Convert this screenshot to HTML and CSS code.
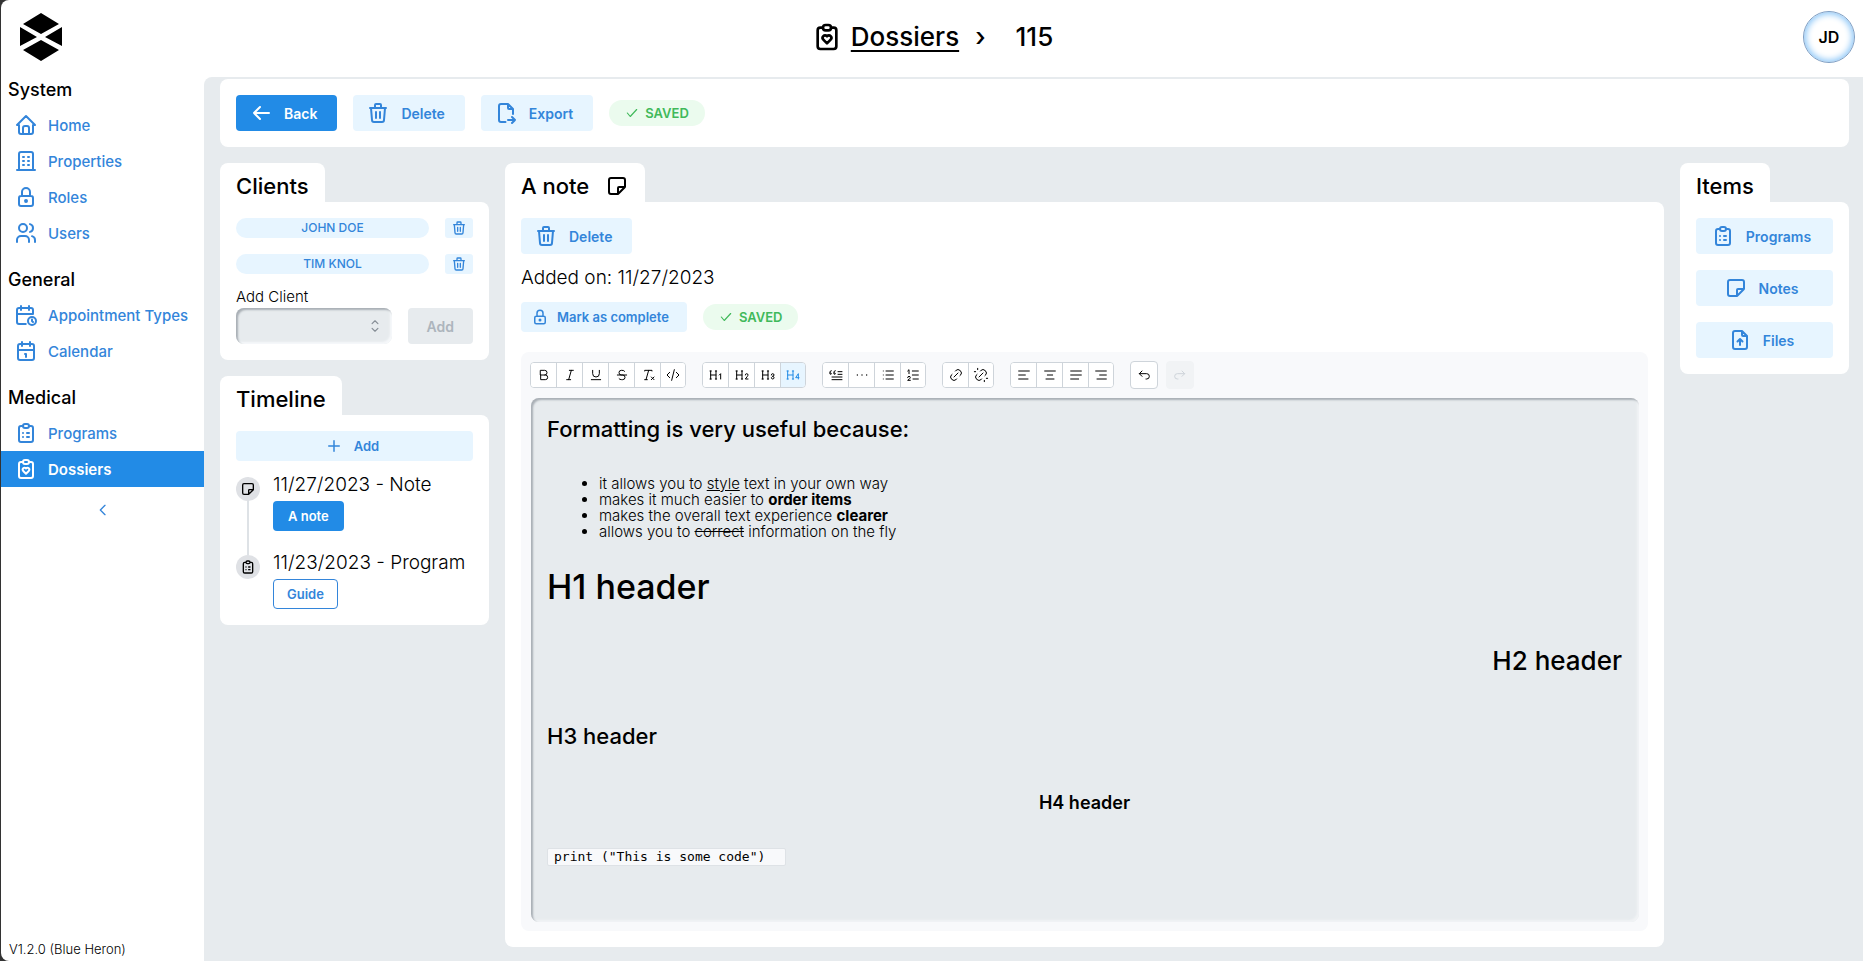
FILE: index.html
```html
<!DOCTYPE html>
<html lang="en">
<head>
<meta charset="utf-8">
<title>Dossiers › 115</title>
<link rel="stylesheet" href="styles.css">
</head>
<body>
<svg class="sprite" aria-hidden="true">
  <symbol id="home" viewBox="0 0 24 24"><path d="M5 12H3l9-9l9 9h-2M5 12v7a2 2 0 0 0 2 2h10a2 2 0 0 0 2-2v-7M9 21v-6a2 2 0 0 1 2-2h2a2 2 0 0 1 2 2v6"/></symbol>
  <symbol id="building" viewBox="0 0 24 24"><path d="M3 21h18M9 8h1M9 12h1M9 16h1M14 8h1M14 12h1M14 16h1M5 21V5a2 2 0 0 1 2-2h10a2 2 0 0 1 2 2v16"/></symbol>
  <symbol id="lock" viewBox="0 0 24 24"><path d="M5 13a2 2 0 0 1 2-2h10a2 2 0 0 1 2 2v6a2 2 0 0 1-2 2H7a2 2 0 0 1-2-2zM11 16a1 1 0 1 0 2 0a1 1 0 0 0-2 0M8 11V7a4 4 0 1 1 8 0v4"/></symbol>
  <symbol id="users" viewBox="0 0 24 24"><path d="M5 7a4 4 0 1 0 8 0a4 4 0 1 0-8 0M3 21v-2a4 4 0 0 1 4-4h4a4 4 0 0 1 4 4v2M16 3.13a4 4 0 0 1 0 7.75M21 21v-2a4 4 0 0 0-3-3.85"/></symbol>
  <symbol id="calendar-time" viewBox="0 0 24 24"><path d="M11.795 21H5a2 2 0 0 1-2-2V7a2 2 0 0 1 2-2h12a2 2 0 0 1 2 2v4M14 18a4 4 0 1 0 8 0a4 4 0 1 0-8 0M15 3v4M7 3v4M3 11h16M18 16.5V18l1 1"/></symbol>
  <symbol id="calendar" viewBox="0 0 24 24"><path d="M4 7a2 2 0 0 1 2-2h12a2 2 0 0 1 2 2v12a2 2 0 0 1-2 2H6a2 2 0 0 1-2-2zM16 3v4M8 3v4M4 11h16M11 15h1v3"/></symbol>
  <symbol id="clip-list" viewBox="0 0 24 24"><path d="M9 5H7a2 2 0 0 0-2 2v12a2 2 0 0 0 2 2h10a2 2 0 0 0 2-2V7a2 2 0 0 0-2-2h-2M9 5a2 2 0 0 1 2-2h2a2 2 0 0 1 2 2a2 2 0 0 1-2 2h-2a2 2 0 0 1-2-2zM9 12h.01M13 12h2M9 16h.01M13 16h2"/></symbol>
  <symbol id="clip-heart" viewBox="0 0 24 24"><path d="M9 5H7a2 2 0 0 0-2 2v12a2 2 0 0 0 2 2h10a2 2 0 0 0 2-2V7a2 2 0 0 0-2-2h-2M9 5a2 2 0 0 1 2-2h2a2 2 0 0 1 2 2a2 2 0 0 1-2 2h-2a2 2 0 0 1-2-2zM11.993 16.75l2.747-2.815a1.9 1.9 0 0 0 0-2.632a1.775 1.775 0 0 0-2.56 0l-.183.188l-.183-.189a1.775 1.775 0 0 0-2.56 0a1.899 1.899 0 0 0 0 2.632z"/></symbol>
  <symbol id="trash" viewBox="0 0 24 24"><path d="M4 7h16M10 11v6M14 11v6M5 7l1 12a2 2 0 0 0 2 2h8a2 2 0 0 0 2-2l1-12M9 7V4a1 1 0 0 1 1-1h4a1 1 0 0 1 1 1v3"/></symbol>
  <symbol id="arrow-left" viewBox="0 0 24 24"><path d="M5 12h15M11 6l-6 6l6 6"/></symbol>
  <symbol id="file-export" viewBox="0 0 24 24"><path d="M14 3v4a1 1 0 0 0 1 1h4M11.500 21H7a2 2 0 0 1-2-2V5a2 2 0 0 1 2-2h7l5 5v5M14 19h7M18 16l3 3l-3 3"/></symbol>
  <symbol id="file-upload" viewBox="0 0 24 24"><path d="M14 3v4a1 1 0 0 0 1 1h4M17 21H7a2 2 0 0 1-2-2V5a2 2 0 0 1 2-2h7l5 5v11a2 2 0 0 1-2 2zM12 11v6M9.500 13.500L12 11l2.500 2.500"/></symbol>
  <symbol id="note" viewBox="0 0 24 24"><path d="M13 20l7-7M13 20v-6a1 1 0 0 1 1-1h6V6a2 2 0 0 0-2-2H6a2 2 0 0 0-2 2v12a2 2 0 0 0 2 2z"/></symbol>
  <symbol id="check" viewBox="0 0 24 24"><path d="M4 12l5 6L20 6"/></symbol>
  <symbol id="plus" viewBox="0 0 24 24"><path d="M12 5v14M5 12h14"/></symbol>
  <symbol id="chev-left" viewBox="0 0 24 24"><path d="M15 5l-7 7l7 7"/></symbol>
  <symbol id="selector" viewBox="0 0 24 24"><path d="M7 8l5-5l5 5M17 16l-5 5l-5-5"/></symbol>
  <symbol id="bold" viewBox="0 0 24 24"><path d="M7 5h6a3.500 3.500 0 0 1 0 7H7zM13 12h1a3.500 3.500 0 0 1 0 7H7v-7"/></symbol>
  <symbol id="italic" viewBox="0 0 24 24"><path d="M11 5h6M7 19h6M14 5l-4 14"/></symbol>
  <symbol id="underline" viewBox="0 0 24 24"><path d="M7 5v5a5 5 0 0 0 10 0V5M5 19h14"/></symbol>
  <symbol id="strike" viewBox="0 0 24 24"><path d="M5 12h14M16 6.500a4 2 0 0 0-4-1.500h-1a3.500 3.500 0 0 0 0 7h2a3.500 3.500 0 0 1 0 7h-1.500a4 2 0 0 1-4-1.500"/></symbol>
  <symbol id="clear" viewBox="0 0 24 24"><path d="M17 15l4 4m0-4l-4 4M7 6V5h11v1M7 19h4M13 5L9 19"/></symbol>
  <symbol id="code" viewBox="0 0 24 24"><path d="M7 8l-4 4l4 4M17 8l4 4l-4 4M14 4l-4 16"/></symbol>
  <symbol id="h1" viewBox="0 0 24 24"><path d="M19 18v-8l-2 2M4 6v12M12 6v12M11 18h2M3 18h2M4 12h8M3 6h2M11 6h2"/></symbol>
  <symbol id="h2" viewBox="0 0 24 24"><path d="M17 12a2 2 0 1 1 4 0c0 .591-.417 1.318-.816 1.858L17 18h4M4 6v12M12 6v12M11 18h2M3 18h2M4 12h8M3 6h2M11 6h2"/></symbol>
  <symbol id="h3" viewBox="0 0 24 24"><path d="M19 14a2 2 0 1 0-2-2M17 16a2 2 0 1 0 2-2M4 6v12M12 6v12M11 18h2M3 18h2M4 12h8M3 6h2M11 6h2"/></symbol>
  <symbol id="h4" viewBox="0 0 24 24"><path d="M20 18v-8l-4 6h5M4 6v12M12 6v12M11 18h2M3 18h2M4 12h8M3 6h2M11 6h2"/></symbol>
  <symbol id="quote" viewBox="0 0 24 24"><path d="M6 15h15M21 19H6M15 11h6M21 7h-6M9 9h1a1 1 0 1 1-1 1V7.500a2 2 0 0 1 2-2M3 9h1a1 1 0 1 1-1 1V7.500a2 2 0 0 1 2-2"/></symbol>
  <symbol id="dots" viewBox="0 0 24 24"><path d="M5 12h.01M12 12h.01M19 12h.01" stroke-width="2"/></symbol>
  <symbol id="list" viewBox="0 0 24 24"><path d="M9 6h11M9 12h11M9 18h11M5 6v.01M5 12v.01M5 18v.01"/></symbol>
  <symbol id="numbers" viewBox="0 0 24 24"><path d="M11 6h9M11 12h9M12 18h8M4 16a2 2 0 1 1 4 0c0 .591-.5 1-1 1.500L4 20h4M6 10V4L4 6"/></symbol>
  <symbol id="link" viewBox="0 0 24 24"><path d="M9 15l6-6M11 6l.463-.536a5 5 0 0 1 7.071 7.072L18 13M13 18l-.397.534a5.068 5.068 0 0 1-7.127 0a4.972 4.972 0 0 1 0-7.071L6 11"/></symbol>
  <symbol id="unlink" viewBox="0 0 24 24"><path d="M17 22v-2M9 15l6-6M11 6l.463-.536a5 5 0 0 1 7.071 7.072L18 13M13 18l-.397.534a5.068 5.068 0 0 1-7.127 0a4.972 4.972 0 0 1 0-7.071L6 11M20 17h2M2 7h2M7 2v2"/></symbol>
  <symbol id="a-left" viewBox="0 0 24 24"><path d="M4 6h16M4 12h10M4 18h14"/></symbol>
  <symbol id="a-center" viewBox="0 0 24 24"><path d="M4 6h16M8 12h8M6 18h12"/></symbol>
  <symbol id="a-just" viewBox="0 0 24 24"><path d="M4 6h16M4 12h16M4 18h12"/></symbol>
  <symbol id="a-right" viewBox="0 0 24 24"><path d="M4 6h16M10 12h10M6 18h14"/></symbol>
  <symbol id="undo" viewBox="0 0 24 24"><path d="M9 14l-4-4l4-4M5 10h11a4 4 0 1 1 0 8h-1"/></symbol>
  <symbol id="redo" viewBox="0 0 24 24"><path d="M15 14l4-4l-4-4M19 10H8a4 4 0 1 0 0 8h1"/></symbol>
</svg>

<div class="app">
  <header class="header">
    <a class="logo" href="#" aria-label="Start">
      <svg viewBox="0 0 42 48"><path d="M21 0l18 11l-18 10L3 11zM21 27l18 10l-18 11L3 37zM0 14l17 10L0 33zM42 14L25 24l17 9z"/></svg>
    </a>
    <nav class="crumbs" aria-label="Breadcrumb">
      <svg class="icon crumb-icon"><use href="#clip-heart"/></svg>
      <a href="#">Dossiers</a><span class="crumb-sep">›</span><span>115</span>
    </nav>
    <button class="avatar" type="button">JD</button>
  </header>

  <div class="body">
    <aside class="sidebar">
      <nav class="nav">
        <h2>System</h2>
        <a href="#"><svg class="icon"><use href="#home"/></svg>Home</a>
        <a href="#"><svg class="icon"><use href="#building"/></svg>Properties</a>
        <a href="#"><svg class="icon"><use href="#lock"/></svg>Roles</a>
        <a href="#"><svg class="icon"><use href="#users"/></svg>Users</a>
        <h2>General</h2>
        <a href="#"><svg class="icon"><use href="#calendar-time"/></svg>Appointment Types</a>
        <a href="#"><svg class="icon"><use href="#calendar"/></svg>Calendar</a>
        <h2>Medical</h2>
        <a href="#"><svg class="icon"><use href="#clip-list"/></svg>Programs</a>
        <a href="#" class="active" aria-current="page"><svg class="icon"><use href="#clip-heart"/></svg>Dossiers</a>
      </nav>
      <button class="collapse" type="button" aria-label="Collapse menu"><svg class="icon icon-s"><use href="#chev-left"/></svg></button>
      <p class="version">V1.2.0 (Blue Heron)</p>
    </aside>

    <main class="main">
      <section class="card actions">
        <button class="btn filled" type="button"><svg class="icon"><use href="#arrow-left"/></svg>Back</button>
        <button class="btn" type="button"><svg class="icon"><use href="#trash"/></svg>Delete</button>
        <button class="btn" type="button"><svg class="icon"><use href="#file-export"/></svg>Export</button>
        <span class="saved"><svg class="icon"><use href="#check"/></svg>SAVED</span>
      </section>

      <div class="columns">
        <div class="side">
          <section class="panel">
            <h2 class="tab">Clients</h2>
            <div class="card stack">
              <div class="client"><span class="pill">JOHN DOE</span><button class="mini" type="button" aria-label="Remove John Doe"><svg class="icon"><use href="#trash"/></svg></button></div>
              <div class="client"><span class="pill">TIM KNOL</span><button class="mini" type="button" aria-label="Remove Tim Knol"><svg class="icon"><use href="#trash"/></svg></button></div>
              <form class="add-client">
                <div class="field">
                  <label for="client">Add Client</label>
                  <div class="select-wrap">
                    <select id="client"><option></option></select>
                    <svg class="icon"><use href="#selector"/></svg>
                  </div>
                </div>
                <button class="btn disabled" type="button" disabled>Add</button>
              </form>
            </div>
          </section>

          <section class="panel">
            <h2 class="tab">Timeline</h2>
            <div class="card stack">
              <button class="btn small" type="button"><svg class="icon"><use href="#plus"/></svg>Add</button>
              <ol class="timeline">
                <li>
                  <span class="bullet"><svg class="icon"><use href="#note"/></svg></span>
                  <div class="event"><p>11/27/2023 - Note</p><button class="btn small filled" type="button">A note</button></div>
                </li>
                <li>
                  <span class="bullet"><svg class="icon"><use href="#clip-list"/></svg></span>
                  <div class="event"><p>11/23/2023 - Program</p><button class="btn small outline" type="button">Guide</button></div>
                </li>
              </ol>
            </div>
          </section>
        </div>

        <section class="panel note">
          <h2 class="tab">A note<svg class="icon"><use href="#note"/></svg></h2>
          <div class="card note-card">
            <button class="btn" type="button"><svg class="icon"><use href="#trash"/></svg>Delete</button>
            <p class="added">Added on: 11/27/2023</p>
            <div class="status">
              <button class="btn small" type="button"><svg class="icon"><use href="#lock"/></svg>Mark as complete</button>
              <span class="saved"><svg class="icon"><use href="#check"/></svg>SAVED</span>
            </div>
            <div class="editor">
              <div class="toolbar" role="toolbar" aria-label="Formatting">
                <div class="group">
                  <button type="button" aria-label="Bold"><svg class="icon"><use href="#bold"/></svg></button>
                  <button type="button" aria-label="Italic"><svg class="icon"><use href="#italic"/></svg></button>
                  <button type="button" aria-label="Underline"><svg class="icon"><use href="#underline"/></svg></button>
                  <button type="button" aria-label="Strikethrough"><svg class="icon"><use href="#strike"/></svg></button>
                  <button type="button" aria-label="Clear formatting"><svg class="icon"><use href="#clear"/></svg></button>
                  <button type="button" aria-label="Code"><svg class="icon"><use href="#code"/></svg></button>
                </div>
                <div class="group">
                  <button type="button" aria-label="Heading 1"><svg class="icon"><use href="#h1"/></svg></button>
                  <button type="button" aria-label="Heading 2"><svg class="icon"><use href="#h2"/></svg></button>
                  <button type="button" aria-label="Heading 3"><svg class="icon"><use href="#h3"/></svg></button>
                  <button type="button" class="on" aria-label="Heading 4" aria-pressed="true"><svg class="icon"><use href="#h4"/></svg></button>
                </div>
                <div class="group">
                  <button type="button" aria-label="Blockquote"><svg class="icon"><use href="#quote"/></svg></button>
                  <button type="button" aria-label="Horizontal line"><svg class="icon"><use href="#dots"/></svg></button>
                  <button type="button" aria-label="Bullet list"><svg class="icon"><use href="#list"/></svg></button>
                  <button type="button" aria-label="Numbered list"><svg class="icon"><use href="#numbers"/></svg></button>
                </div>
                <div class="group">
                  <button type="button" aria-label="Link"><svg class="icon"><use href="#link"/></svg></button>
                  <button type="button" aria-label="Remove link"><svg class="icon"><use href="#unlink"/></svg></button>
                </div>
                <div class="group">
                  <button type="button" aria-label="Align left"><svg class="icon"><use href="#a-left"/></svg></button>
                  <button type="button" aria-label="Align center"><svg class="icon"><use href="#a-center"/></svg></button>
                  <button type="button" aria-label="Justify"><svg class="icon"><use href="#a-just"/></svg></button>
                  <button type="button" aria-label="Align right"><svg class="icon"><use href="#a-right"/></svg></button>
                </div>
                <div class="history">
                  <button type="button" aria-label="Undo"><svg class="icon"><use href="#undo"/></svg></button>
                  <button type="button" aria-label="Redo" disabled><svg class="icon"><use href="#redo"/></svg></button>
                </div>
              </div>
              <div class="content" role="textbox" aria-multiline="true" aria-label="Note text" contenteditable="true" spellcheck="false">
                <h3>Formatting is very useful because:</h3>
                <ul>
                  <li>it allows you to <u>style</u> text in your own way</li>
                  <li>makes it much easier to <strong>order items</strong></li>
                  <li>makes the overall text experience <strong>clearer</strong></li>
                  <li>allows you to <s>correct</s> information on the fly</li>
                </ul>
                <h1>H1 header</h1>
                <h2>H2 header</h2>
                <h3>H3 header</h3>
                <h4>H4 header</h4>
                <p><code>print ("This is some code") </code></p>
              </div>
            </div>
          </div>
        </section>

        <section class="panel">
          <h2 class="tab">Items</h2>
          <div class="card stack">
            <button class="btn" type="button"><svg class="icon"><use href="#clip-list"/></svg>Programs</button>
            <button class="btn" type="button"><svg class="icon"><use href="#note"/></svg>Notes</button>
            <button class="btn" type="button"><svg class="icon"><use href="#file-upload"/></svg>Files</button>
          </div>
        </section>
      </div>
    </main>
  </div>
</div>
</body>
</html>
```

FILE: styles.css
```css
:root {
  --blue: #228be6;
  --blue-text: #3385da;
  --light: #e7f5ff;
  --gray: #e7ebee;
  --line: #ced4da;
}

* { box-sizing: border-box; }

html { background: #333; }

body {
  margin: 0;
  color: #000;
  font-family: Inter, "Liberation Sans", sans-serif;
  font-size: 14px;
}

h1, h2, h3, h4, p, ul, ol { margin: 0; padding: 0; }

button, select { font: inherit; margin: 0; }

.sprite { display: none; }

.icon {
  width: 24px;
  height: 24px;
  flex: none;
  fill: none;
  stroke: currentColor;
  stroke-width: 2;
  stroke-linecap: round;
  stroke-linejoin: round;
}

.icon-s { width: 16px; height: 16px; }

.app {
  min-height: 100vh;
  margin-left: 1px;
  display: flex;
  flex-direction: column;
  background: #fff;
  border-radius: 8px 0 0 8px;
  overflow: hidden;
}

/* Header */
.header {
  height: 73px;
  padding: 0 8px;
  display: grid;
  grid-template-columns: 1fr auto 1fr;
  align-items: center;
}

.logo { width: 42px; height: 48px; margin-left: 11px; }
.logo svg { display: block; width: 42px; height: 48px; }

.crumbs {
  display: flex;
  align-items: center;
  font-size: 26px;
  font-weight: 500;
  line-height: 32px;
}

.crumb-icon { width: 32px; height: 32px; margin-right: 8px; }
.crumbs a { color: inherit; text-underline-offset: 4px; text-decoration-thickness: 2px; }
.crumb-sep { margin: 0 30px 0 16px; }

.avatar {
  justify-self: end;
  width: 52px;
  height: 52px;
  border: 1px solid #7f9fc4;
  border-radius: 50%;
  background: #fff;
  box-shadow: inset 0 0 6px 2px #8fc8f8;
  color: #000;
  font-size: 16px;
  font-weight: 600;
}

/* Sidebar */
.body { flex: 1; display: flex; }

.sidebar {
  width: 203px;
  flex: none;
  display: flex;
  flex-direction: column;
}

.nav { display: flex; flex-direction: column; }

.nav h2 {
  margin-top: 12px;
  padding-left: 7px;
  font-size: 18px;
  font-weight: 500;
  line-height: 34px;
}

.nav h2:first-child { margin-top: 0; }

.nav a {
  height: 36px;
  padding-left: 13px;
  display: flex;
  align-items: center;
  gap: 10px;
  color: var(--blue-text);
  font-size: 15px;
  font-weight: 500;
  text-decoration: none;
}

.nav a.active { background: var(--blue); color: #fff; font-weight: 600; }

.collapse {
  height: 46px;
  padding: 0;
  border: 0;
  background: none;
  color: var(--blue-text);
}
.collapse .icon { display: block; margin: auto; }

.version {
  margin-top: auto;
  padding: 0 8px 4px;
  font-size: 13px;
  font-weight: 300;
  line-height: 16px;
}

/* Main */
.main {
  flex: 1;
  min-width: 0;
  margin-top: 4px;
  padding: 2px 14px 14px 16px;
  display: flex;
  flex-direction: column;
  gap: 16px;
  background: var(--gray);
  border-top-left-radius: 8px;
}

.card { padding: 16px; background: #fff; border-radius: 8px; }
.stack { display: flex; flex-direction: column; gap: 16px; }

.actions { display: flex; align-items: center; gap: 16px; }

.columns {
  flex: 1;
  display: grid;
  grid-template-columns: 269px minmax(0, 1fr) 169px;
  gap: 16px;
}

.side { display: flex; flex-direction: column; gap: 16px; }

.tab {
  width: fit-content;
  height: 39px;
  padding: 6px 16px 0;
  display: flex;
  align-items: center;
  gap: 16px;
  background: #fff;
  border-radius: 8px 8px 0 0;
  font-size: 22px;
  font-weight: 500;
  line-height: 30px;
}

.panel .card { border-top-left-radius: 0; }

.btn {
  height: 36px;
  padding: 0 20px 0 13px;
  display: inline-flex;
  align-items: center;
  justify-content: center;
  gap: 11px;
  border: 0;
  border-radius: 4px;
  background: var(--light);
  color: var(--blue-text);
  font-size: 14px;
  font-weight: 600;
}

.btn.filled { background: var(--blue); color: #fff; }

.btn.small {
  height: 30px;
  padding: 0 15px 0 10px;
  font-size: 13px;
}
.btn.small .icon { width: 18px; height: 18px; }
.note-card .btn.small { padding-right: 18px; gap: 8px; }

.btn.disabled { padding: 0 19px; background: var(--gray); color: #adb5bd; }

.saved {
  height: 26px;
  padding: 0 16px;
  display: inline-flex;
  align-items: center;
  gap: 6px;
  border-radius: 13px;
  background: #ebfbee;
  color: #40b95a;
  font-size: 13px;
  font-weight: 600;
}
.saved .icon { width: 14px; height: 14px; }

/* Clients */
.client { display: flex; gap: 16px; }

.pill {
  flex: 1;
  height: 20px;
  border-radius: 10px;
  background: var(--light);
  color: var(--blue-text);
  font-size: 12px;
  font-weight: 500;
  line-height: 20px;
  text-align: center;
}

.mini {
  width: 28px;
  height: 20px;
  padding: 0;
  display: grid;
  place-items: center;
  border: 0;
  border-radius: 3px;
  background: var(--light);
  color: var(--blue-text);
}
.mini .icon { width: 16px; height: 16px; }

.add-client { display: flex; align-items: flex-end; gap: 16px; }
.field { flex: 1; }
.field label {
  display: block;
  margin-bottom: 4px;
  font-size: 15px;
  font-weight: 300;
  line-height: 14px;
}

.select-wrap { position: relative; }

.select-wrap select {
  display: block;
  width: 100%;
  height: 36px;
  border: 0;
  border-radius: 8px;
  appearance: none;
  background: var(--gray);
  box-shadow: inset 2px 2px 2px #a9afb5, inset -2px -2px 2px #f6f8fa;
}

.select-wrap .icon {
  position: absolute;
  top: 11px;
  right: 10px;
  width: 14px;
  height: 14px;
  color: #868e96;
  pointer-events: none;
}

/* Timeline */
.timeline { list-style: none; display: flex; flex-direction: column; }

.timeline li {
  position: relative;
  display: flex;
  gap: 13px;
  padding-bottom: 24px;
}
.timeline li:last-child { padding-bottom: 0; }

.timeline li:not(:last-child)::before {
  content: "";
  position: absolute;
  top: 0;
  bottom: 0;
  left: 11px;
  width: 2px;
  background: #dee2e6;
}

.bullet {
  position: relative;
  width: 24px;
  height: 24px;
  flex: none;
  display: grid;
  place-items: center;
  border-radius: 50%;
  background: #dfe1e5;
}
.bullet .icon { width: 16px; height: 16px; }

.event p {
  margin-bottom: 8px;
  font-size: 19px;
  font-weight: 300;
  line-height: 16px;
  white-space: nowrap;
}

.event .btn.small { padding: 0 15px; }
.event .btn.outline { padding: 0 13px; border: 1px solid var(--blue-text); background: #fff; }

/* Note */
.note { display: flex; flex-direction: column; }

.note-card {
  flex: 1;
  display: flex;
  flex-direction: column;
  align-items: flex-start;
}

.added {
  margin: 12px 0;
  font-size: 19px;
  font-weight: 300;
  line-height: 24px;
}

.status { display: flex; align-items: center; gap: 16px; }

.editor {
  flex: 1;
  align-self: stretch;
  margin-top: 20px;
  padding: 9px;
  display: flex;
  flex-direction: column;
  gap: 9px;
  background: #f8f9fb;
  border-radius: 8px;
}

.toolbar { display: flex; align-items: center; gap: 16px; }

.group {
  display: flex;
  border: 1px solid var(--line);
  border-radius: 4px;
  background: #fff;
  overflow: hidden;
}

.toolbar button {
  width: 26px;
  height: 24px;
  padding: 0;
  display: grid;
  place-items: center;
  border: 0;
  background: #fff;
  color: #000;
}
.toolbar .icon { width: 16px; height: 16px; stroke-width: 1.5; }
.group button + button { border-left: 1px solid var(--line); }
.group button:first-child { width: 25px; }
.group button:last-child { width: 25px; }
.toolbar button.on { background: var(--light); color: var(--blue); }

.history { display: flex; gap: 8px; }
.toolbar .history button {
  width: 28px;
  height: 28px;
  border: 1px solid var(--line);
  border-radius: 4px;
}
.toolbar .history button:disabled {
  border-color: #f1f3f5;
  background: #f1f3f5;
  color: #ced4da;
}

.content {
  flex: 1;
  margin: 0 0 0 1px;
  padding: 16px 17px 16px 16px;
  background: var(--gray);
  border-radius: 8px;
  box-shadow: inset 2px 2px 2px #a9afb5, inset -2px -2px 2px #f1f3f5;
  font-size: 15px;
}

.content h1, .content h2, .content h3, .content h4 { font-weight: 500; }
.content h1 { margin-top: 27px; font-size: 34px; line-height: 40px; }
.content h2 { margin-top: 36px; font-size: 26px; line-height: 36px; text-align: right; }
.content h3 { margin-top: 42px; font-size: 22px; line-height: 30px; }
.content h3:first-child { margin-top: 0; }
.content h4 { margin-top: 40px; font-size: 18px; line-height: 24px; font-weight: 600; text-align: center; }

.content ul {
  margin-top: 32px;
  padding-left: 52px;
  font-weight: 300;
  line-height: 16px;
}

.content strong { font-weight: 700; }

.content p { margin-top: 32px; line-height: 18px; }

.content code {
  display: inline-block;
  padding: 0 12px 0 6px;
  border: 1px solid #dee2e6;
  border-radius: 2px;
  background: #f8f9fb;
  font-family: "DejaVu Sans Mono", monospace;
  font-size: 13px;
  line-height: 16px;
  white-space: pre;
}
```
